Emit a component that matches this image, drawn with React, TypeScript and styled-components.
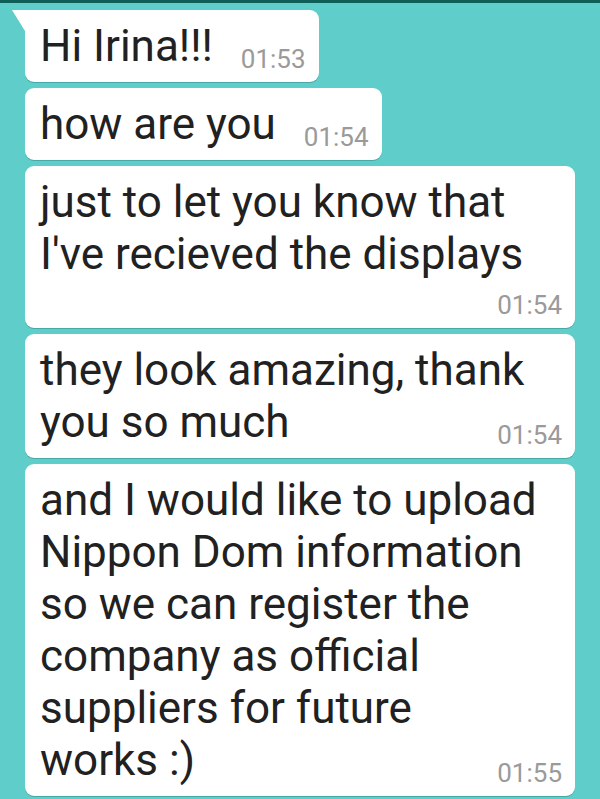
import styled, { createGlobalStyle } from "styled-components"

const GlobalStyle = createGlobalStyle`
    html, body {
        margin: 0;
        padding: 0;
        background-color: #5fcdc9;
    }
    body {
        font-family: Roboto, "Noto Sans", sans-serif;
    }
`

const Screen = styled.main`
    min-height: 799px;
    background-color: #5fcdc9;
`

const TopBar = styled.div`
    height: 3px;
    background-color: #0e5f57;
`

const Conversation = styled.section`
    display: flex;
    flex-direction: column;
    align-items: flex-start;
    gap: 6px;
    padding: 7px 25px 0 25px;
`

interface BubbleProps {
    $tail?: boolean
}

const Bubble = styled.div<BubbleProps>`
    position: relative;
    display: flow-root;
    max-width: 550px;
    box-sizing: border-box;
    padding: 10px 13px 10px 15px;
    background-color: #ffffff;
    border-radius: ${props => props.$tail ? '0 9px 9px 9px' : '9px'};
    box-shadow: 0 1px 0.5px rgba(0, 60, 55, 0.25);
    color: #212121;
    font-size: 44px;
    line-height: 52px;

    &::before{
        content: '';
        display: ${props => props.$tail ? 'block' : 'none'};
        position: absolute;
        top: 0;
        left: -13px;
        width: 13px;
        height: 21px;
        background-color: #ffffff;
        clip-path: polygon(0 0, 100% 0, 100% 100%);
    }
`

interface TimeProps {
    $ownLine?: boolean
}

const Time = styled.span<TimeProps>`
    display: ${props => props.$ownLine ? 'block' : 'inline-block'};
    float: ${props => props.$ownLine ? 'none' : 'right'};
    margin: ${props => props.$ownLine ? '12px 0 0 0' : '26px 0 0 28px'};
    text-align: right;
    font-size: 26px;
    line-height: 26px;
    color: #9a9a9a;
`

interface Message {
    text: string
    time: string
    ownLine?: boolean
}

const messages: Message[] = [
    { text: "Hi Irina!!!", time: "01:53" },
    { text: "how are you", time: "01:54" },
    { text: "just to let you know that I've recieved the displays", time: "01:54", ownLine: true },
    { text: "they look amazing, thank you so much", time: "01:54" },
    // the smiley stays with its word, as on the phone
    { text: "and I would like to upload Nippon Dom information so we can register the company as official suppliers for future works\u00a0:)", time: "01:55" },
]

export default function App() {
    return (
        <>
            <GlobalStyle />
            <Screen>
                <TopBar />
                <Conversation>
                    {messages.map((msg, i) => (
                        <Bubble key={i} $tail={i === 0}>
                            {msg.text}
                            <Time $ownLine={msg.ownLine}>{msg.time}</Time>
                        </Bubble>
                    ))}
                </Conversation>
            </Screen>
        </>
    )
}
